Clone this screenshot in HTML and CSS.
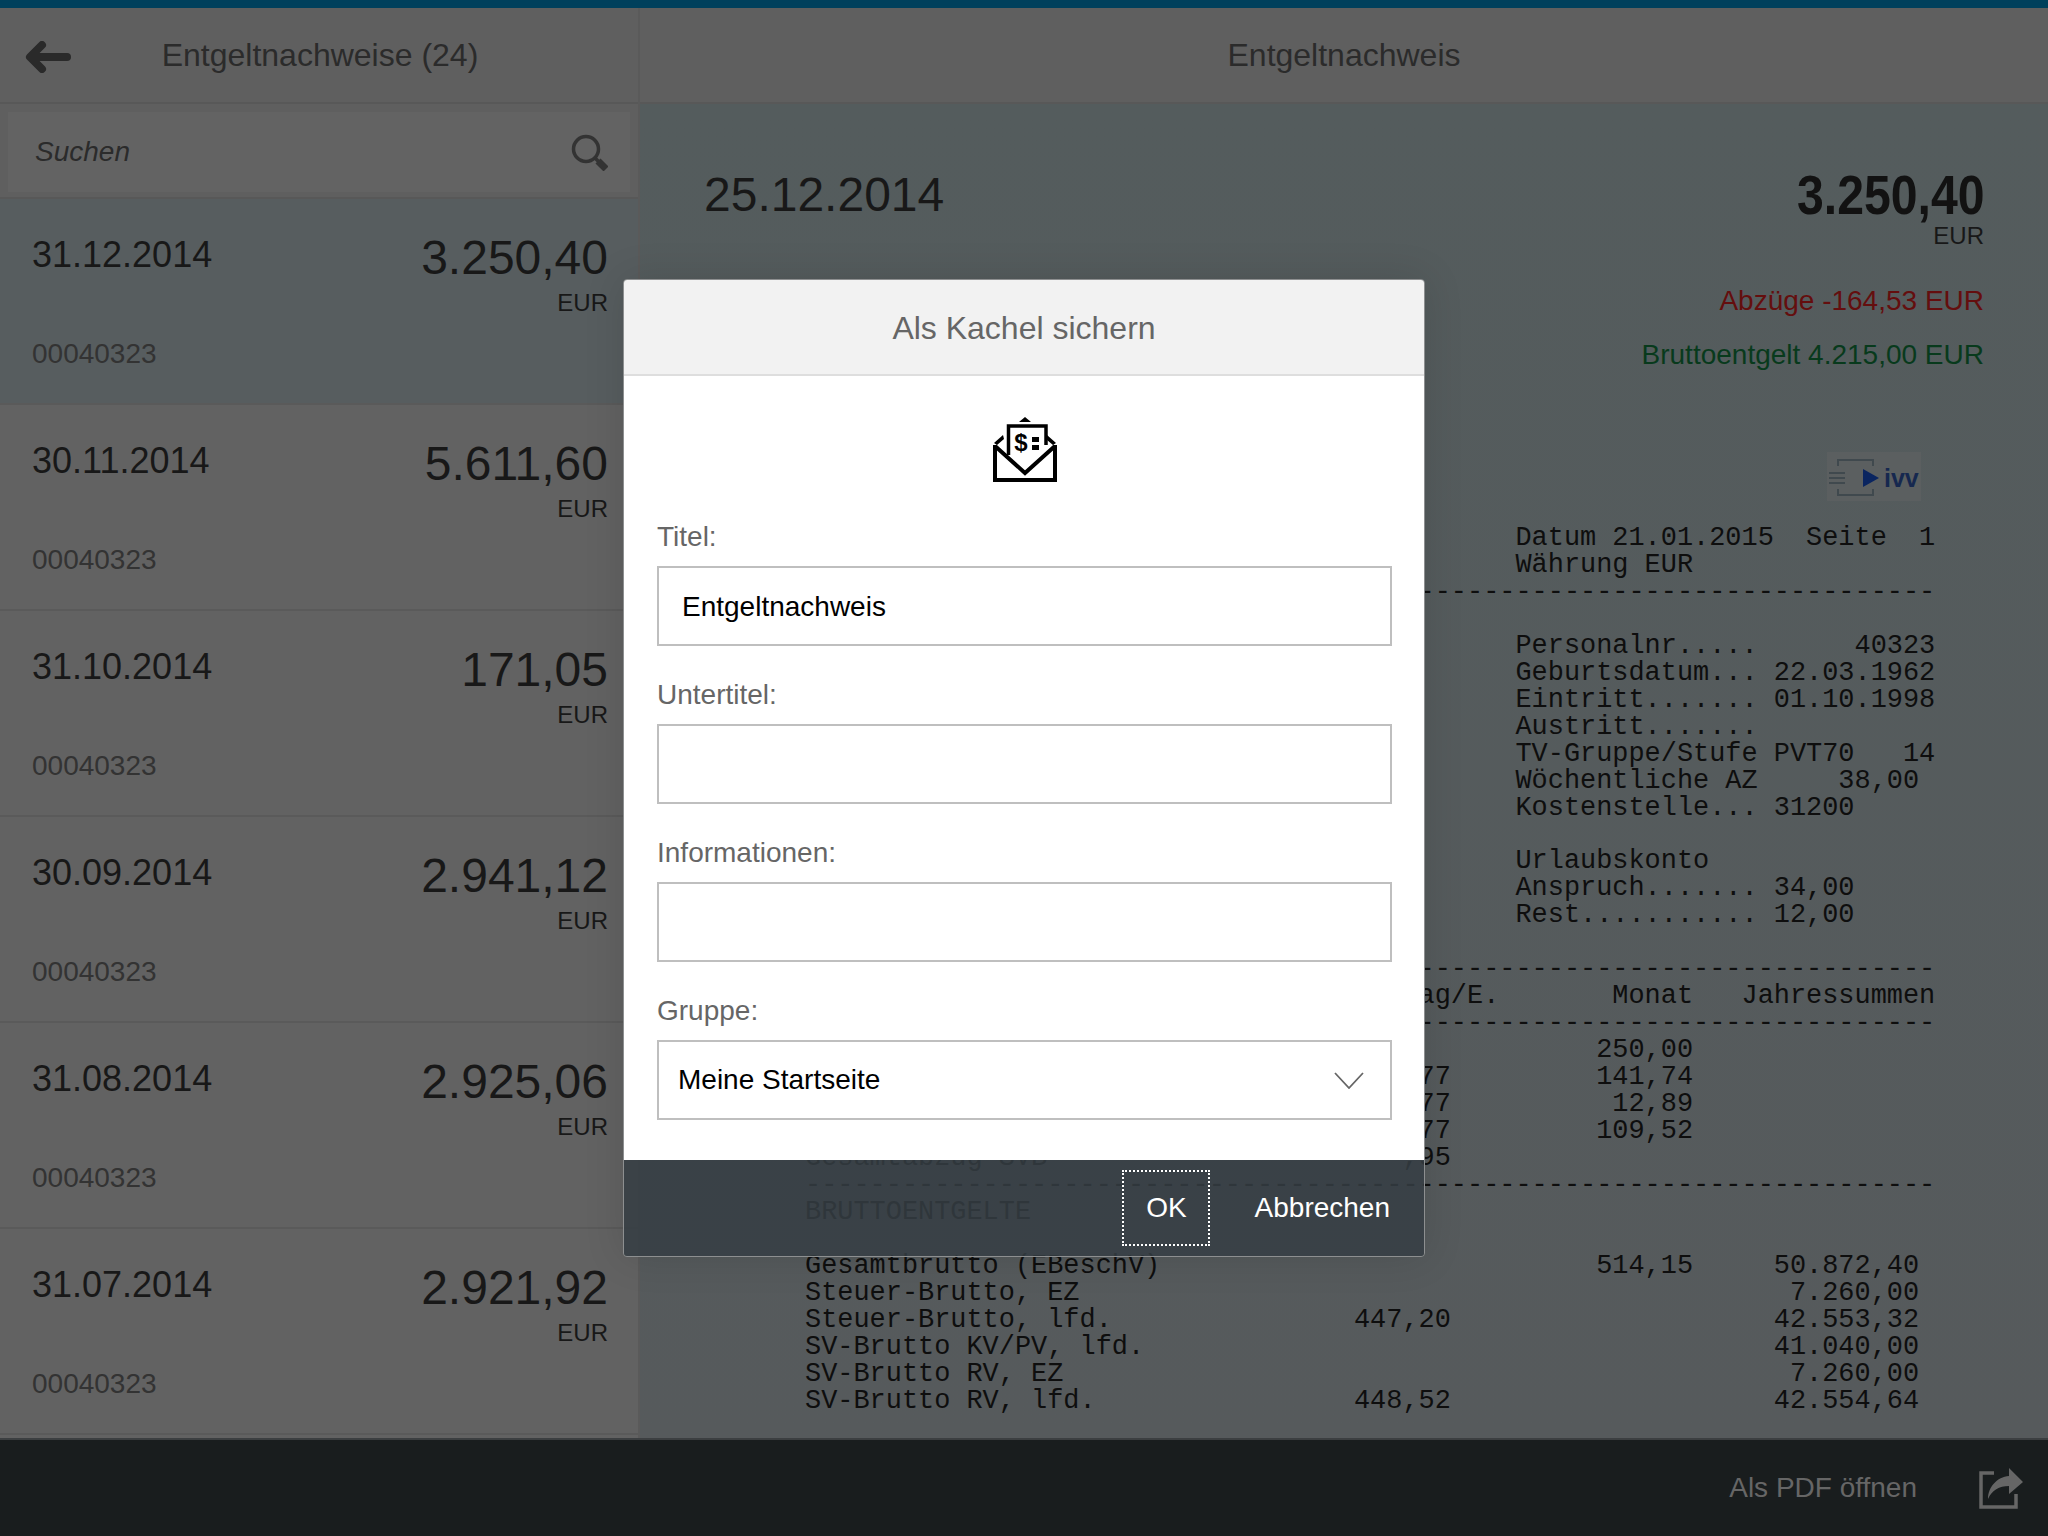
FILE: index.html
```html
<!DOCTYPE html>
<html lang="en">
<head>
    <meta charset="UTF-8">
    <title>Entgeltnachweise</title>
    <link rel="stylesheet" href="styles.css">
</head>
<body>
    <div class="top-bar"></div>

    <div class="main">
        <!-- Master list -->
        <div class="master">
            <div class="head head-master">
                <svg class="back-icon" width="46" height="32" viewBox="0 0 46 32">
                    <path d="M17 4 L5 16 L17 28 M7 16 H42" fill="none" stroke="#2a2a2a" stroke-width="8" stroke-linecap="round" stroke-linejoin="round"/>
                </svg>
                <div class="head-title">Entgeltnachweise (24)</div>
            </div>
            <div class="search-wrap">
                <div class="search">
                    <span>Suchen</span>
                    <svg width="37" height="37" viewBox="0 0 37 37">
                        <circle cx="15" cy="15" r="12.5" fill="none" stroke="#333" stroke-width="3.5"/>
                        <path d="M24 24 L28 28" stroke="#333" stroke-width="3.5"/>
                        <path d="M27 27 L35 35" stroke="#333" stroke-width="7"/>
                    </svg>
                </div>
            </div>
            <div class="item selected">
                <div><div class="item-date">31.12.2014</div><div class="item-nr">00040323</div></div>
                <div class="item-right"><div class="item-amount">3.250,40</div><div class="item-cur">EUR</div></div>
            </div>
            <div class="item">
                <div><div class="item-date">30.11.2014</div><div class="item-nr">00040323</div></div>
                <div class="item-right"><div class="item-amount">5.611,60</div><div class="item-cur">EUR</div></div>
            </div>
            <div class="item">
                <div><div class="item-date">31.10.2014</div><div class="item-nr">00040323</div></div>
                <div class="item-right"><div class="item-amount">171,05</div><div class="item-cur">EUR</div></div>
            </div>
            <div class="item">
                <div><div class="item-date">30.09.2014</div><div class="item-nr">00040323</div></div>
                <div class="item-right"><div class="item-amount">2.941,12</div><div class="item-cur">EUR</div></div>
            </div>
            <div class="item">
                <div><div class="item-date">31.08.2014</div><div class="item-nr">00040323</div></div>
                <div class="item-right"><div class="item-amount">2.925,06</div><div class="item-cur">EUR</div></div>
            </div>
            <div class="item">
                <div><div class="item-date">31.07.2014</div><div class="item-nr">00040323</div></div>
                <div class="item-right"><div class="item-amount">2.921,92</div><div class="item-cur">EUR</div></div>
            </div>
        </div>

        <!-- Detail -->
        <div class="detail">
            <div class="head"><div class="head-title">Entgeltnachweis</div></div>
            <div class="detail-body">
                <div class="summary">
                    <div class="summary-date">25.12.2014</div>
                    <div class="summary-right">
                        <div class="summary-amount">3.250,40</div>
                        <div class="summary-cur">EUR</div>
                        <div class="summary-minus">Abzüge -164,53 EUR</div>
                        <div class="summary-plus">Bruttoentgelt 4.215,00 EUR</div>
                    </div>
                </div>
                <div class="logo-row">
                    <svg class="logo" width="94" height="49" viewBox="0 0 94 49">
                        <path d="M11 14 V8 H46 V14 M11 37 V43 H46 V37" fill="none" stroke="#40494e" stroke-width="2"/>
                        <path d="M2 21 H18 M2 26 H18 M2 31 H18" stroke="#40494e" stroke-width="2"/>
                        <path d="M36 17 L52 26 L36 35 Z" fill="#0a2560"/>
                        <text x="57" y="35" class="logo-text">ivv</text>
                    </svg>
                </div>
<pre class="doc">                                            Datum 21.01.2015  Seite  1
                                            Währung EUR
----------------------------------------------------------------------

                                            Personalnr.....      40323
                                            Geburtsdatum... 22.03.1962
                                            Eintritt....... 01.10.1998
                                            Austritt.......
                                            TV-Gruppe/Stufe PVT70   14
                                            Wöchentliche AZ     38,00
                                            Kostenstelle... 31200

                                            Urlaubskonto
                                            Anspruch....... 34,00
                                            Rest........... 12,00

----------------------------------------------------------------------
                                      ag/E.       Monat   Jahressummen
----------------------------------------------------------------------
                                                 250,00
                                      77         141,74
                                      77          12,89
                                      77         109,52
Gesamtabzug SVB                      ,95
----------------------------------------------------------------------
BRUTTOENTGELTE

Gesamtbrutto (EBeschV)                           514,15     50.872,40
Steuer-Brutto, EZ                                            7.260,00
Steuer-Brutto, lfd.               447,20                    42.553,32
SV-Brutto KV/PV, lfd.                                       41.040,00
SV-Brutto RV, EZ                                             7.260,00
SV-Brutto RV, lfd.                448,52                    42.554,64</pre>
            </div>
        </div>
    </div>

    <div class="bottom-bar">
        <span>Als PDF öffnen</span>
        <svg width="44" height="42" viewBox="0 0 44 42">
            <path d="M15 6 H2 V40 H37 V27" fill="none" stroke="#666" stroke-width="3.5"/>
            <path d="M30 1 L44 15 L30 27 V19 C20 19 13 23 9 32 C9 20 18 10 30 9 Z" fill="#666"/>
        </svg>
    </div>

    <!-- Dialog -->
    <div class="dialog">
        <div class="dialog-head">Als Kachel sichern</div>
        <div class="dialog-body">
            <div class="dialog-icon">
                <svg width="64" height="65" viewBox="0 0 64 65">
                    <path d="M26 5 L32 0 L38 5 Z" fill="#000"/>
                    <path d="M15.5 38 V9 H53 V28" fill="none" stroke="#000" stroke-width="3.5"/>
                    <text x="28" y="34" class="dollar">$</text>
                    <rect x="39" y="20" width="7" height="5"/>
                    <rect x="39" y="28" width="7" height="5"/>
                    <path d="M1 26 L10 18 L11 22 L4 28 Z M54 18 L63 26 L60 28 L54 23 Z" fill="#000"/>
                    <path d="M2 28 V63 H62 V28 M2 29 L32 56 L62 29" fill="none" stroke="#000" stroke-width="4"/>
                </svg>
            </div>
            <label class="field-label">Titel:</label>
            <div class="field-input">Entgeltnachweis</div>
            <label class="field-label">Untertitel:</label>
            <div class="field-input"></div>
            <label class="field-label">Informationen:</label>
            <div class="field-input"></div>
            <label class="field-label">Gruppe:</label>
            <div class="field-input field-select">
                <span>Meine Startseite</span>
                <svg width="30" height="17" viewBox="0 0 30 17">
                    <path d="M1 1 L15 16 L29 1" fill="none" stroke="#666" stroke-width="1.8"/>
                </svg>
            </div>
        </div>
        <div class="dialog-foot">
            <button class="btn btn-focus">OK</button>
            <button class="btn">Abbrechen</button>
        </div>
    </div>
</body>
</html>
```

FILE: styles.css
```css
/* colours are written as they look under the dialog's dimming */
html, body { margin: 0; height: 100%; }
body {
    width: 2048px;
    height: 1536px;
    display: flex;
    flex-direction: column;
    overflow: hidden;
    position: relative;
    font-family: "Liberation Sans", Arial, sans-serif;
    background: #5f5f5f;
}

.top-bar { height: 8px; background: #00405c; flex: none; }

.main { flex: 1; display: flex; min-height: 0; }

.master {
    width: 638px;
    flex: none;
    background: #626262;
    border-right: 2px solid #5a5a5a;
    overflow: hidden;
}
.detail { flex: 1; display: flex; flex-direction: column; min-width: 0; }

.head {
    height: 94px;
    flex: none;
    background: #5f5f5f;
    border-bottom: 2px solid #585858;
    display: flex;
    align-items: center;
    justify-content: center;
    position: relative;
}
.head-master .head-title { margin-left: 2px; }
.head-title { font-size: 32px; color: #2b2b2b; }
.back-icon { position: absolute; left: 25px; top: 33px; }

.search-wrap {
    padding: 8px 8px 5px;
    background: #5f5f5f;
    border-bottom: 2px solid #585858;
}
.search {
    height: 80px;
    background: #636363;
    display: flex;
    align-items: center;
    justify-content: space-between;
    padding: 0 22px 0 27px;
    font-size: 28px;
    font-style: italic;
    color: #2b2b2b;
}

.item {
    height: 204px;
    border-bottom: 2px solid #5a5a5a;
    display: flex;
    justify-content: space-between;
    padding: 0 30px 0 32px;
}
.item.selected { background: #575d5f; }
.item-date { font-size: 36px; line-height: 44px; margin-top: 34px; color: #181818; }
.item-nr { font-size: 28px; line-height: 40px; margin-top: 57px; color: #333; }
.item-right { text-align: right; padding-top: 30px; }
.item-amount { font-size: 48px; line-height: 58px; color: #181818; }
.item-cur { font-size: 24px; line-height: 31px; color: #181818; }

.detail-body {
    flex: 1;
    min-height: 0;
    overflow: hidden;
    padding: 0 64px 0 64px;
    background: linear-gradient(#545c5d, #565a5c);
}
.summary { display: flex; justify-content: space-between; padding-top: 59px; }
.summary-date { font-size: 48px; line-height: 64px; color: #181818; }
.summary-right { text-align: right; }
.summary-amount {
    font-size: 56px;
    line-height: 64px;
    font-weight: bold;
    color: #121212;
    transform: scaleX(.86);
    transform-origin: right;
}
.summary-cur { font-size: 24px; line-height: 28px; margin-top: -5px; color: #181818; }
.summary-minus { font-size: 28px; line-height: 36px; margin-top: 33px; color: #640e0e; }
.summary-plus { font-size: 28px; line-height: 36px; margin-top: 18px; color: #083a1c; }

.logo-row { display: flex; justify-content: flex-end; padding: 79px 63px 0 0; }
.logo { background: #5b5f60; display: block; }
.logo-text { font-size: 25px; font-weight: bold; fill: #16284f; font-family: "Liberation Sans", sans-serif; }

.doc {
    margin: 24px 0 0 101px;
    font-family: "Liberation Mono", "Courier New", monospace;
    font-size: 26.92px;
    line-height: 26.96px;
    color: #0e0e0e;
}

.bottom-bar {
    height: 96px;
    flex: none;
    background: #191d1e;
    border-top: 2px solid #3c3f41;
    display: flex;
    align-items: center;
    justify-content: flex-end;
    gap: 62px;
    padding-right: 25px;
    font-size: 28px;
    color: #666;
}

/* dialog floats over the page */
.dialog {
    position: absolute;
    left: 623px;
    top: 279px;
    width: 800px;
    border: 1px solid #8d8f90;
    border-radius: 4px;
    overflow: hidden;
    box-shadow: 0 0 40px rgba(0, 0, 0, .12);
}
.dialog-head {
    height: 94px;
    line-height: 97px;
    text-align: center;
    font-size: 32px;
    color: #666;
    background: #f2f2f2;
    border-bottom: 2px solid #dedede;
}
.dialog-body { background: #fff; padding: 41px 32px 40px 33px; }
.dialog-icon { height: 65px; display: flex; justify-content: center; margin-bottom: 36px; }
.dollar { font-size: 24px; font-weight: bold; text-anchor: middle; font-family: "Liberation Sans", sans-serif; }

.field-label {
    display: block;
    font-size: 28px;
    line-height: 38px;
    margin: 30px 0 10px;
    color: #666;
}
.field-input {
    height: 76px;
    border: 2px solid #bfbfbf;
    line-height: 78px;
    padding: 0 23px;
    font-size: 28px;
    color: #000;
}
.field-select {
    display: flex;
    align-items: center;
    justify-content: space-between;
    padding: 0 26px 0 19px;
}

.dialog-foot {
    height: 96px;
    background: rgba(53, 61, 67, .85);
    display: flex;
    justify-content: flex-end;
    align-items: center;
    gap: 31px;
    padding-right: 20px;
}
.btn {
    height: 76px;
    background: none;
    border: 2px dotted transparent;
    font: 28px "Liberation Sans", Arial, sans-serif;
    color: #fff;
    padding: 0 12px;
}
.btn-focus { width: 88px; border-color: #fff; padding: 0 0 0 2px; }
```
